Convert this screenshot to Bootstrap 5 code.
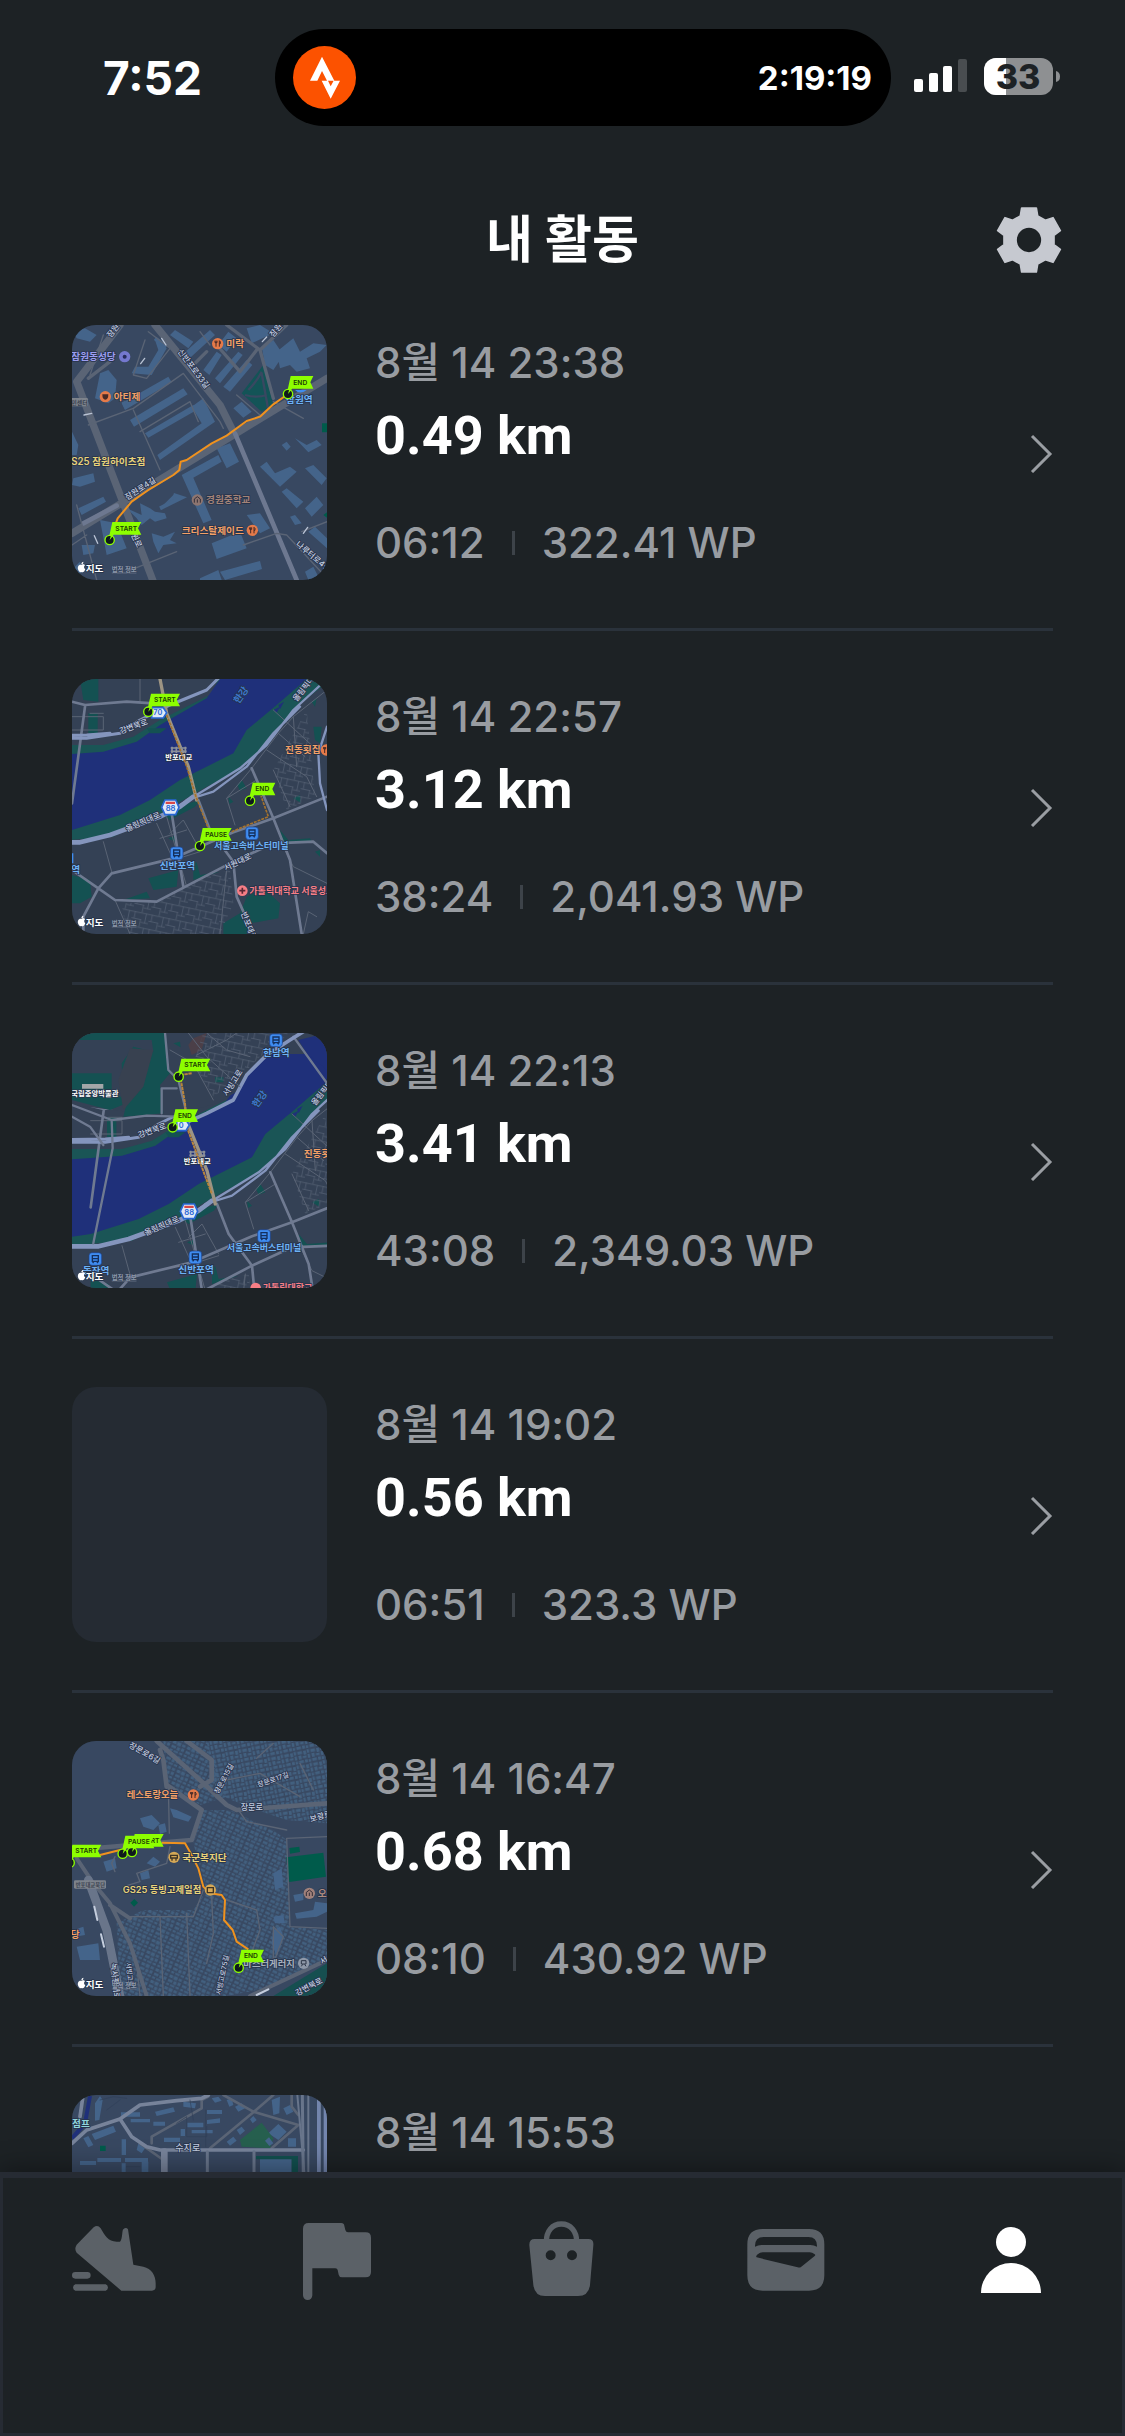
<!DOCTYPE html>
<html lang="ko">
<head>
    <meta charset="UTF-8">
    <meta name="viewport" content="width=device-width, initial-scale=1.0">
    <title>내 활동</title>
    <!-- Bootstrap CSS -->
    <link href="https://cdn.jsdelivr.net/npm/bootstrap@5.3.3/dist/css/bootstrap.min.css" rel="stylesheet">
    <!-- Custom CSS -->
    <style>
        body {
            background: #1d2225;
            color: #fff;
            font-family: Inter, "Noto Sans CJK KR", sans-serif;
        }

        /* Status bar */
        .status-bar {
            height: 155px;
            padding: 0 65px 0 103px;
        }

        .clock {
            width: 172px;
            font-size: 46px;
            line-height: 50px;
            font-weight: 700;
        }

        .island {
            height: 97px;
            margin-right: 23px;
            padding: 0 19px 0 18px;
            border-radius: 49px;
            background: #000;
            font-size: 33px;
            line-height: 40px;
            font-weight: 700;
        }

        .signal {
            margin-right: 17px;
        }

        /* Title bar */
        .title-bar {
            height: 170px;
            padding: 0 61px;
        }

        .title-bar h1 {
            font-size: 51px;
            line-height: 60px;
            font-weight: 700;
        }

        .side-slot {
            width: 70px;
            height: 70px;
        }

        /* Activity list */
        .activity-list {
            min-height: 0;
            padding: 0 72px;
        }

        .activity {
            padding-bottom: 48px;
            margin-bottom: 48px;
            border-bottom: 3px solid #2a323b;
            color: #989ca1;
            font-size: 42px;
            line-height: 50px;
            font-weight: 500;
        }

        .activity:hover {
            color: #989ca1;
        }

        .thumb {
            width: 255px;
            height: 255px;
            margin-right: 48px;
            border-radius: 24px;
            background: #252b33;
        }

        .activity-text {
            padding-top: 13px;
        }

        .distance {
            margin: 18px 0 52px;
            color: #fff;
            font-family: Roboto, sans-serif;
            font-size: 54px;
            line-height: 60px;
            font-weight: 700;
        }

        .stats {
            gap: 27px;
        }

        .stats i {
            width: 3px;
            height: 24px;
            background: #3d4349;
        }

        /* Tab bar */
        .tab-bar {
            height: 264px;
            padding: 39px 65px 0;
            border: 3px solid #262b33;
            border-top-width: 6px;
            background: #1d2225;
            box-shadow: 0 -4px 24px rgba(0, 0, 0, 0.35);
            color: #5b6167;
            z-index: 2;
        }

        .tab-bar a.active {
            color: #fff;
        }

        /* Map drawings, unscoped so that they also reach the shared symbols */
        text {
            font-weight: 600;
            paint-order: stroke;
            stroke: #27334a;
            stroke-width: 5px;
            stroke-linejoin: round;
            font-size: 29px;
        }

        .battery-text {
            font-size: 34px;
            font-weight: 800;
            fill: #1d2225;
            stroke: none;
        }

        .road-name {
            font-size: 24px;
            fill: #c3cde0;
            font-weight: 500;
        }

        .orange { fill: #f3a066; }
        .gold { fill: #e8d27a; }
        .blue { fill: #6cb1f5; }
        .red { fill: #f77e86; }
        .pale { fill: #fff; }

        .flag-text {
            font-size: 20px;
            fill: #1c3d05;
            stroke: none;
        }

        .roads {
            fill: none;
            stroke: #5a6475;
            stroke-linejoin: round;
            stroke-linecap: round;
        }

        .route {
            fill: none;
            stroke: #f0921e;
            stroke-width: 6;
            stroke-linejoin: round;
        }
    </style>
</head>
<body>
    <!-- Shared map symbols -->
    <svg width="0" height="0" class="position-absolute" aria-hidden="true">
        <defs>
            <g id="pin">
                <circle r="14" fill="#101a1c" stroke="#8dff00" stroke-width="4"/>
                <path d="M0 0L4-15L10-12Z" fill="#8dff00"/>
            </g>
            <path id="flagShort" d="M8-54H76L67-35L76-16H12L4-2L-3-4Z" fill="#8dff00"/>
            <path id="flagLong" d="M8-54H95L85-35L95-16H12L4-2L-3-4Z" fill="#8dff00"/>
            <g id="flagEnd">
                <use href="#flagShort"/><use href="#pin"/>
                <text class="flag-text" x="16" y="-28">END</text>
            </g>
            <g id="flagStart">
                <use href="#flagLong"/><use href="#pin"/>
                <text class="flag-text" x="17" y="-28">START</text>
            </g>
            <g id="flagPause">
                <use href="#flagLong"/><use href="#pin"/>
                <text class="flag-text" x="16" y="-28">PAUSE</text>
            </g>
            <g id="credit">
                <path d="M10-20C14-24 20-22 21-19C16-15 18-9 22-7C19 1 15 3 11 1C7 3 2 0 0-7C-2-15 3-23 10-20ZM10-22C10-27 13-29 16-30C17-26 14-22 10-22Z" fill="#fff"/>
                <text class="pale" x="23" y="0">지도</text>
                <text x="101" y="0" fill="#8e99ab" style="font-size:19px;stroke-width:1px" text-decoration="underline">법적 정보</text>
            </g>
            <g id="station">
                <rect x="-19" y="-19" width="38" height="38" rx="9" fill="#3f8cf0" stroke="#1d3f86" stroke-width="2"/>
                <path d="M-9-10H9V7H-9ZM-8 12L-4 7M8 12L4 7M-9-1H9" fill="none" stroke="#14305f" stroke-width="4"/>
            </g>
            <g id="food">
                <circle r="17" fill="#e57a49"/>
                <path d="M-5-9V9M-8-9V-3H-2V-9M5-9V9M5-9L8-6V0H5" fill="none" stroke="#472a26" stroke-width="3"/>
            </g>
            <pattern id="blocks" width="46" height="38" patternUnits="userSpaceOnUse" patternTransform="rotate(24)">
                <path d="M2 3H13V12H2ZM16 2H28V13H16ZM32 4H42V11H32ZM3 17H17V25H3ZM21 17H30V27H21ZM34 15H43V25H34ZM2 29H11V36H2ZM15 30H29V36H15ZM33 29H43V36H33Z" fill="#42607f"/>
            </pattern>
            <pattern id="blocksAlt" width="40" height="42" patternUnits="userSpaceOnUse" patternTransform="rotate(-12)">
                <path d="M2 2H16V11H2ZM20 3H28V15H20ZM31 1H38V11H31ZM3 15H12V26H3ZM16 18H27V25H16ZM31 15H38V27H31ZM2 30H16V38H2ZM20 29H28V39H20ZM31 31H38V39H31Z" fill="#42607f"/>
            </pattern>
            <pattern id="streets" width="52" height="44" patternUnits="userSpaceOnUse" patternTransform="rotate(12)">
                <path d="M0 2H52M0 22H30M30 30H52M8 0V22M28 22V44M42 2V30" fill="none" stroke="#566275" stroke-width="2"/>
            </pattern>
            <g id="hex88">
                <path d="M-26 0L-16-22H16L26 0L16 22H-16Z" fill="#dfe8f7" stroke="#2766d4" stroke-width="5"/>
                <path d="M-14-17H14V-10H-14Z" fill="#d84848"/>
                <text x="-14" y="12" fill="#2766d4" style="font-size:23px;stroke:none">88</text>
            </g>
            <g id="bridge">
                <path d="M-24-6H24M-24 4H24M-20-10V10M-7-10V10M7-10V10M20-10V10" fill="none" stroke="#8c919a" stroke-width="5"/>
                <text class="pale" text-anchor="middle" y="31" style="font-size:22px">반포대교</text>
            </g>
        </defs>
    </svg>

    <div class="vh-100 d-flex flex-column overflow-hidden">
        <!-- Status bar -->
        <div class="status-bar d-flex align-items-center flex-shrink-0">
            <div class="clock">7:52</div>
            <div class="island d-flex align-items-center justify-content-between flex-grow-1">
                <svg width="63" height="63" viewBox="99 78 189 189" aria-hidden="true">
                    <circle cx="193.500" cy="172.500" r="94.500" fill="#fc5200"/>
                    <path fill="#fff" d="M186 110L223 182H201L186 153L172 182H150ZM185 182H204L212 199L221 182H240L212 236Z"/>
                </svg>
                <span>2:19:19</span>
            </div>
            <svg class="signal" width="53" height="38" viewBox="0 0 53 38" aria-hidden="true">
                <rect x="0" y="20" width="9" height="13" rx="2" fill="#fff"/>
                <rect x="15" y="14" width="9" height="19" rx="2" fill="#fff"/>
                <rect x="29" y="7" width="9" height="26" rx="2" fill="#fff"/>
                <rect x="44" y="0" width="9" height="33" rx="2" fill="#494d50"/>
            </svg>
            <svg width="76" height="53" viewBox="0 -7 76 53" role="img" aria-label="33">
                <rect width="69" height="37" rx="12" fill="#8e9092"/>
                <path d="M12 0H22V37H12A12 12 0 0 1 0 25V12A12 12 0 0 1 12 0Z" fill="#fff"/>
                <path d="M72 13Q76 14 76 18.500T72 24Z" fill="#8e9092"/>
                <text class="battery-text" x="34" y="31" text-anchor="middle">33</text>
            </svg>
        </div>

        <!-- Title bar -->
        <header class="title-bar d-flex align-items-center flex-shrink-0">
            <div class="side-slot"></div>
            <h1 class="flex-grow-1 text-center mb-0">내 활동</h1>
            <button type="button" class="side-slot btn border-0 p-0 d-flex align-items-center justify-content-center" aria-label="설정">
                <svg width="68" height="68" viewBox="-102 -102 204 204">
                    <path fill="#c6c9d0" stroke="#c6c9d0" stroke-width="5" stroke-linejoin="round" fill-rule="evenodd" d="M-26-72L-22-96H22L26-72L49-59L72-67L94-28L75-14V14L94 28L72 67L49 59L26 72L22 96H-22L-26 72L-49 59L-72 67L-94 28L-75 14V-14L-94-28L-72-67L-49-59ZM39 0A39 39 0 1 0-39 0A39 39 0 1 0 39 0Z"/>
                </svg>
            </button>
        </header>

        <!-- Activity list -->
        <main class="activity-list flex-grow-1 overflow-hidden">
            <a href="#" class="activity d-flex text-decoration-none">
                <svg class="thumb flex-shrink-0" viewBox="36 30 765 765" aria-hidden="true">
                    <path fill="#384861" d="M36 30H801V795H36Z"/>
                    <g fill="#44648a">
                        <path d="M120 175L145 165L170 195L165 250L145 265L105 250ZM40 50L75 40L110 60L90 80L50 70ZM285 75L320 100L275 180L215 175L225 155L265 155L295 105ZM185 265L325 185L335 202L195 285ZM330 60L345 45L400 80L385 100ZM365 120L450 45L465 60L380 138ZM210 315L370 220L383 238L222 335ZM255 355L400 270L410 285L265 368ZM395 275L430 250L465 320L300 435L292 420L425 325ZM430 165L470 110L485 120L448 180ZM465 190L535 110L548 120L480 205ZM490 215L560 135L577 150L510 230ZM475 90L505 50L530 70L500 110ZM520 280L545 260L575 290L550 308ZM470 400L510 385L537 440L500 460ZM365 480L475 420L485 440L400 488L455 615L430 625ZM200 580L245 600L240 565L270 580L285 590L315 595L320 610L285 620L270 610L245 630L230 610ZM455 685L540 650L560 700L470 732ZM275 655L310 665L345 650L330 675L350 685L310 690L295 715L280 680ZM600 455L620 440L645 475L690 455L710 470L660 515ZM665 390L680 380L692 395L680 407ZM705 370L740 390L770 375L785 390L745 412ZM735 460L760 450L800 490L785 510ZM665 530L680 520L730 560L710 580ZM735 580L770 545L790 570L755 605ZM690 605L705 600L725 625L705 630ZM605 95L640 75L670 120L640 165L615 150ZM650 110L700 70L720 110L760 85L800 90L780 110L740 130L750 160L710 170L690 150L660 160ZM480 770L600 738L606 762L495 795ZM420 790L475 765L485 795H420ZM120 615L170 625L200 700L140 720ZM65 690L105 690L100 715L70 720ZM36 350L55 390L50 420H36ZM55 580L130 545L138 560L65 600ZM40 490L100 475L105 500L60 515L36 510ZM745 650L765 635L801 670V700ZM735 770L760 755L780 795H745ZM560 600L600 595L630 640L600 655Z"/>
                        <path d="M285 70L320 95M190 260L200 280M340 540L365 548L300 580" stroke="#44648a" stroke-width="12"/>
                        <path d="M40 760L60 740L70 770L45 780ZM560 40L600 30L640 55L575 85Z"/>
                    </g>
                    <path fill="#135457" d="M545 235L610 150L640 270L605 290Z"/>
                    <path fill="none" stroke="#384861" stroke-width="7" d="M565 225Q590 200 605 170M555 240Q590 250 620 240M605 175L625 285"/>
                    <path fill="#005b4b" d="M786 325H801V352H786ZM790 600L801 592V608Z"/>
                    <g class="roads">
                        <path stroke-width="22" d="M180 30L50 200L280 800M285 30L480 270L520 350M36 655L520 360L801 190"/>
                        <path stroke-width="10" d="M500 30L600 105L640 250M600 105L680 30M590 105L540 170L470 90M85 190L150 140M440 110L400 150"/>
                        <path stroke="#6d7890" stroke-width="14" d="M525 355L710 795M70 625L170 572"/>
                        <path stroke-width="4" d="M265 50L330 100L260 190L220 180L255 75M85 330L220 280L370 175L480 320L490 340M220 285L300 465M240 350L390 260L415 320M90 180L130 60M550 690L650 655L680 660L801 790M50 570L110 795M36 690L80 660M200 770L350 710M725 650L801 620M640 260L730 310M530 240L600 300M420 50L450 90"/>
                        <path stroke="#b9c3d4" stroke-width="4" d="M305 70L318 90M242 146L254 130M607 80L620 66M72 300L95 295M103 662L113 685M730 655L743 637"/>
                    </g>
                    <path class="route" d="M149 675L173 610L215 560L265 525L340 480L358 465L362 440L380 435L455 385L500 362L560 318L600 305L640 268L684 237"/>
                    <text class="road-name" transform="translate(152 70) rotate(-52)">잠원</text>
                    <text class="road-name" transform="translate(352 110) rotate(53)">신반포로33길</text>
                    <text class="road-name" transform="translate(202 556) rotate(-33)">잠원로4길</text>
                    <text class="road-name" transform="translate(640 68) rotate(-50)">잠원</text>
                    <text class="road-name" transform="translate(203 640) rotate(64)">잠원로</text>
                    <text class="road-name" transform="translate(706 690) rotate(40)">나루터로4길</text>
                    <text x="34" y="135" fill="#9b9df0">잠원동성당</text>
                    <circle cx="194" cy="125" r="17" fill="#7478cf"/><circle cx="194" cy="125" r="6" fill="#272c5c"/>
                    <use href="#food" x="473" y="86"/><text class="orange" x="499" y="96">미락</text>
                    <circle cx="136" cy="245" r="17" fill="#e57a49"/><path d="M127 238H145Q145 254 136 254T127 238Z" fill="#472a26"/>
                    <text class="orange" x="161" y="256">아티제</text>
                    <rect x="30" y="249" width="54" height="25" rx="4" fill="#7d838c"/>
                    <text x="34" y="269" fill="#3a4250" style="font-size:18px;stroke:none">민센터</text>
                    <text class="gold" x="34" y="449">S25 잠원하이츠점</text>
                    <circle cx="412" cy="555" r="17" fill="#8d7570"/><path d="M403 563V552L412 545L421 552V563M412 553V563" fill="none" stroke="#332e38" stroke-width="3"/>
                    <text x="438" y="565" fill="#a38378">경원중학교</text>
                    <text class="orange" x="365" y="656">크리스탈제이드</text><use href="#food" x="577" y="646"/>
                    <path d="M705 225Q720 240 740 225Z" fill="#3f8cf0"/>
                    <text class="blue" x="678" y="264">잠원역</text>
                    <use href="#flagEnd" x="684" y="237"/>
                    <use href="#flagStart" x="149" y="675"/>
                    <use href="#credit" x="54" y="770"/>
                </svg>
                <div class="activity-text">
                    <div>8월 14 23:38</div>
                    <div class="distance">0.49 km</div>
                    <div class="stats d-flex align-items-center"><span>06:12</span><i></i><span>322.41 WP</span></div>
                </div>
                <svg class="ms-auto align-self-center" width="24" height="40" viewBox="0 0 24 40" aria-hidden="true">
                    <path d="M3 3L21 21L3 39" fill="none" stroke="#9a9ea3" stroke-width="3"/>
                </svg>
            </a>

            <a href="#" class="activity d-flex text-decoration-none">
                <svg class="thumb flex-shrink-0" viewBox="36 27 765 765" aria-hidden="true">
                    <g id="riverside">
                        <path fill="#344155" d="M-100-200H900V900H-100Z"/>
                        <path fill="#1a5556" d="M-100 225L130 225L220 200L300 150L460 70L500-60L860-60L801 40L720 100L620 220L540 300L440 350L300 430L160 500L-100 520Z"/>
                        <path fill="#1f307a" d="M-100 262L36 252L130 245L230 215L300 165L440 85L480 27L540-60L830-60L740 27L650 105L560 180L520 250L420 300L360 330L270 390L180 435L36 480L-100 500Z"/>
                        <path fill="#145152" d="M60 27H115V95L70 90ZM85 130H113V190H85ZM260 175L320 175L300 190H270ZM770 85L765 110L755 95ZM545 330L560 355L540 362L532 345ZM505 380L520 395L508 402ZM760 170H785L780 220L765 210ZM300 430L330 415L420 390L405 410L330 450ZM265 625L355 600L350 650L280 660ZM400 580L410 577L420 615L480 605L400 630ZM190 690L260 665L270 685ZM660 480L685 510L750 505L755 515L670 515ZM765 545L780 540V560ZM36 615L90 630L95 680L60 700H36ZM490 760L540 730L560 680L610 655L660 700L655 745L570 760L560 792H490ZM325 505L345 497V515ZM700 385L720 375L722 398Z"/>
                        <path fill="#1f307a" d="M640 120L660 110L650 128ZM655 105L672 95L660 118Z"/>
                        <path fill="url(#streets)" d="M185 700L300 695L430 620L510 600L520 700L480 792H200ZM640 300L740 120L765 380L680 420Z"/>
                        <g class="roads">
                            <path stroke-width="3" d="M575 295L655 190L700 140L801 60M575 295L500 385L525 465M620 240L740 320L770 380M655 190L735 260M640 120L760 230M700 140L710 290M640 300L690 410M500 385L590 330M240 27V95M130 515L155 605M290 460L340 570L420 545M330 490L370 450L420 540M300 505L380 480M165 690L210 792M36 140H130V180H36M90 130H130M660 510L700 590L801 640M500 600L480 792M730 792L745 725L770 740M320 440L380 650"/>
                            <path stroke="#6f7a91" stroke-width="8" d="M115 655L155 610L340 565L520 487L640 445L801 380M575 295L640 445L690 570L725 792M115 655L165 690L290 695L520 575L640 520L760 515L801 550M115 655L70 740V792M36 600L115 655M335 430L370 650M415 390L450 480L520 575L530 680L580 792M36 95L75 105L200 95L280 100M75 110L36 400"/>
                            <path stroke="#8495bd" stroke-width="9" d="M-60 205L80 205L180 190L240 150L330 105L440 60L490 10M-60 197L80 195L150 190"/>
                            <path stroke="#8495bd" stroke-width="14" d="M-60 517L60 517L150 495L300 440L360 410L400 380"/>
                            <path stroke="#8495bd" stroke-width="7" d="M360 405L450 350L540 295L620 225L700 120L801 27M380 390L460 365L560 290L640 190L720 110M801 170L775 250L780 340L801 420"/>
                            <path stroke="#9d9483" stroke-width="10" d="M300 27L320 130L385 290L410 390"/>
                        </g>
                        <text class="road-name" transform="translate(182 192) rotate(-20)">강변북로</text>
                        <text class="road-name" transform="translate(202 485) rotate(-24)">올림픽대로</text>
                        <text class="road-name" transform="translate(710 96) rotate(-52)">올림픽대로</text>
                        <text transform="translate(536 103) rotate(-55)" fill="#3b78d0">한강</text>
                        <use href="#bridge" x="356" y="240"/>
                        <use href="#hex88" x="331" y="412"/>
                        <text class="orange" x="675" y="250">진동횟집</text>
                        <use href="#food" x="799" y="240"/>
                        <use href="#station" x="350" y="550"/>
                        <text class="blue" x="299" y="597">신반포역</text>
                    </g>
                    <path fill="none" stroke="#a5722d" stroke-width="5" stroke-dasharray="9 3" d="M320 135L380 290L408 380L445 475M515 485L625 440L603 378"/>
                    <text class="road-name" transform="translate(497 603) rotate(-26)">서원대로</text>
                    <text class="road-name" transform="translate(542 730) rotate(68)">반포대로</text>
                    <use href="#station" x="576" y="490"/>
                    <text class="blue" x="462" y="536" style="font-size:27px">서울고속버스터미널</text>
                    <path d="M36 550V580" stroke="#3f8cf0" stroke-width="8"/>
                    <text class="blue" x="34" y="610">역</text>
                    <circle cx="547" cy="662" r="16" fill="#f77e86"/><path d="M547 653V671M538 662H556" stroke="#5c2735" stroke-width="5"/>
                    <text class="red" x="568" y="672" style="font-size:27px">가톨릭대학교 서울성모</text>
                    <path d="M275 113H310L320 128L310 144H275Z" fill="#dfe8f7" stroke="#2766d4" stroke-width="5"/>
                    <text x="280" y="136" fill="#2766d4" style="font-size:22px;stroke:none">70</text>
                    <use href="#flagStart" x="265" y="125"/>
                    <use href="#flagEnd" x="570" y="392"/>
                    <use href="#flagPause" x="420" y="528"/>
                    <use href="#credit" x="54" y="767"/>
                </svg>
                <div class="activity-text">
                    <div>8월 14 22:57</div>
                    <div class="distance">3.12 km</div>
                    <div class="stats d-flex align-items-center"><span>38:24</span><i></i><span>2,041.93 WP</span></div>
                </div>
                <svg class="ms-auto align-self-center" width="24" height="40" viewBox="0 0 24 40" aria-hidden="true">
                    <path d="M3 3L21 21L3 39" fill="none" stroke="#9a9ea3" stroke-width="3"/>
                </svg>
            </a>

            <a href="#" class="activity d-flex text-decoration-none">
                <svg class="thumb flex-shrink-0" viewBox="36 39 765 765" aria-hidden="true">
                    <!-- Same stretch of the river, a little further north-west -->
                    <use href="#riverside" x="56" y="162"/>
                    <path fill="#344155" d="M36 39H720L660 85L580 140L530 215L470 250L330 290L36 255Z"/>
                    <path fill="#145152" d="M36 39H315L330 160L300 195L310 280L190 290L200 250L150 270L36 240V160H155V215L190 235L185 130L220 80L280 95L275 60H36ZM465 172H490V187H465ZM340 70L360 65L362 82Z"/>
                    <path fill="#384150" d="M210 85L280 90L250 200L190 270L175 180Z"/>
                    <path fill="#4b3f48" d="M400 55L440 39L425 90L395 105L385 75Z"/>
                    <path fill="url(#streets)" d="M430 39H690L600 110L530 180L460 230L400 130Z"/>
                    <path fill="#1f307a" d="M715 60L801 39V150L740 100Z"/>
                    <g class="roads">
                        <path stroke="#6f7a91" stroke-width="7" d="M315 39L325 150L355 180L375 260L380 300M36 255L155 300L260 287L350 290M700 50L801 190M155 300L158 385L100 670M36 290L90 320L130 375M305 280V205H350"/>
                        <path stroke="#8495bd" stroke-width="11" d="M385 305L440 280L520 240L560 165L620 105L690 60L730 35"/>
                        <path stroke-width="3" d="M385 39L440 110L540 200M440 39L500 90L570 110M330 90L400 130L460 240M410 105L500 60L530 39"/>
                    </g>
                    <path class="route" style="stroke:#b8853d" stroke-dasharray="10 2" d="M395 160L360 165L375 250L380 320L410 400L455 520"/>
                    <text class="road-name" transform="translate(502 230) rotate(-58)">서빙고로</text>
                    <path d="M66 192H130V206H66Z" fill="#a3a6a8"/>
                    <text class="pale" x="34" y="227" style="font-size:22px">국립중앙박물관</text>
                    <use href="#station" x="648" y="61"/>
                    <text class="blue" x="609" y="107">한남역</text>
                    <use href="#station" x="612" y="648"/>
                    <text class="blue" x="500" y="693" style="font-size:27px">서울고속버스터미널</text>
                    <use href="#station" x="106" y="717"/>
                    <text class="blue" x="68" y="761">동작역</text>
                    <circle cx="587" cy="804" r="16" fill="#f77e86"/>
                    <text class="red" x="608" y="812" style="font-size:27px">가톨릭대학교</text>
                    <path d="M350 300H378L388 315L378 332H350Z" fill="#dfe8f7" stroke="#2766d4" stroke-width="5"/>
                    <text x="356" y="324" fill="#2766d4" style="font-size:22px;stroke:none">0</text>
                    <use href="#flagStart" x="356" y="170"/>
                    <use href="#flagEnd" x="338" y="322"/>
                    <use href="#credit" x="54" y="779"/>
                </svg>
                <div class="activity-text">
                    <div>8월 14 22:13</div>
                    <div class="distance">3.41 km</div>
                    <div class="stats d-flex align-items-center"><span>43:08</span><i></i><span>2,349.03 WP</span></div>
                </div>
                <svg class="ms-auto align-self-center" width="24" height="40" viewBox="0 0 24 40" aria-hidden="true">
                    <path d="M3 3L21 21L3 39" fill="none" stroke="#9a9ea3" stroke-width="3"/>
                </svg>
            </a>

            <a href="#" class="activity d-flex text-decoration-none">
                <div class="thumb flex-shrink-0"></div>
                <div class="activity-text">
                    <div>8월 14 19:02</div>
                    <div class="distance">0.56 km</div>
                    <div class="stats d-flex align-items-center"><span>06:51</span><i></i><span>323.3 WP</span></div>
                </div>
                <svg class="ms-auto align-self-center" width="24" height="40" viewBox="0 0 24 40" aria-hidden="true">
                    <path d="M3 3L21 21L3 39" fill="none" stroke="#9a9ea3" stroke-width="3"/>
                </svg>
            </a>

            <a href="#" class="activity d-flex text-decoration-none">
                <svg class="thumb flex-shrink-0" viewBox="36 33 765 765" aria-hidden="true">
                    <path fill="#384861" d="M36 33H801V798H36Z"/>
                    <path fill="url(#blocks)" d="M430 240L510 240L640 300L680 330L690 590L801 600V690L640 770L500 798H180L170 580L250 540L400 540L440 480L400 340ZM310 33H440L500 200L420 225L320 160Z"/>
                    <path fill="url(#blocksAlt)" d="M440 33H801V280L680 270L560 230L470 190Z"/>
                    <path fill="#44648a" d="M240 265L275 255L300 280L280 300L250 290ZM330 235L350 240L395 260L385 275L340 262ZM295 285L315 280L320 305L300 312ZM130 395L165 385L170 415L140 425ZM260 400L280 380L300 395L285 410ZM240 430L265 420L270 445L245 450ZM50 650L115 640L120 690L60 690ZM40 600L70 590L75 615L45 620ZM705 550L760 540L765 515L801 520V545L770 560L710 566ZM640 430L665 415L670 470L645 480ZM640 560L670 555L675 580H645ZM700 495L730 490V510L705 515ZM640 600L660 590L670 620L650 680L635 640Z"/>
                    <path fill="#005b4b" d="M678 382L790 368L798 440L688 456ZM688 354L718 350L720 366L690 371ZM211 518L223 507L234 518L222 530Z"/>
                    <path fill="#164f50" d="M640 798L801 700V798Z"/>
                    <g class="roads">
                        <path stroke-width="14" d="M290 33L420 150L500 225L530 240L801 220M320 170L310 90L300 60M320 165L425 240L395 330L36 360M380 33L455 90V150L420 170"/>
                        <path stroke-width="4" d="M325 170L328 310M680 325L801 320M680 325L690 590L801 595M535 240L560 275L680 300M720 100L760 180M590 85L640 40M500 150L600 130L720 200M165 380L155 400L165 425M230 430L320 400L330 350M230 430L240 455L190 470M455 500L460 610L440 700M500 510L590 540L600 600L570 680M430 480L400 560L200 560M640 590L670 620L640 700ZM190 600L230 700L240 798M300 560L310 798M380 550L390 798"/>
                        <path stroke-width="12" d="M50 385L100 460L150 520L210 640L260 798M150 525L210 565M570 798L801 690"/>
                        <path stroke="#69758a" stroke-width="26" d="M85 450L140 600L180 798"/>
                        <path stroke="#c4cddd" stroke-width="6" d="M103 530L112 570M123 613L132 650M590 795L625 778"/>
                    </g>
                    <path class="route" d="M120 375L180 360M305 338L375 340L395 375L415 415L430 470L450 490L485 495L495 510L492 570L518 600L530 635L565 658"/>
                    <text class="road-name" transform="translate(205 50) rotate(30)">장문로6길</text>
                    <text class="road-name" style="font-size:21px" transform="translate(475 193) rotate(-62)">장문로15길</text>
                    <text class="road-name" style="font-size:21px" transform="translate(595 172) rotate(-19)">장문로17길</text>
                    <text class="road-name" x="542" y="239">장문로</text>
                    <text class="road-name" transform="translate(752 276) rotate(-16)">보광로</text>
                    <text class="road-name" transform="translate(152 700) rotate(84)">녹사평대로</text>
                    <text class="road-name" style="font-size:20px" transform="translate(198 698) rotate(84)">서빙고로</text>
                    <text class="road-name" style="font-size:21px" transform="translate(482 796) rotate(-78)">서빙고로75길</text>
                    <text class="road-name" transform="translate(712 798) rotate(-28)">강변북로</text>
                    <text class="road-name" transform="translate(786 704) rotate(-30)">서</text>
                    <text class="orange" x="200" y="205" style="font-size:28px">레스토랑오늘</text><use href="#food" x="400" y="195"/>
                    <circle cx="342" cy="382" r="17" fill="#d5a856"/><path d="M332 376H352V384H332ZM336 384V392M348 384V392" fill="none" stroke="#3f3526" stroke-width="4"/>
                    <text class="gold" x="367" y="392">국군복지단</text>
                    <text class="gold" x="188" y="490" style="font-size:28px">GS25 동빙고제일점</text>
                    <circle cx="451" cy="480" r="17" fill="#d5a856"/><path d="M442 473H460V488H442Z" fill="none" stroke="#3f3526" stroke-width="4"/>
                    <circle cx="748" cy="490" r="17" fill="#a0807a"/><path d="M739 498V487L748 480L757 487V498M748 488V498" fill="none" stroke="#332e38" stroke-width="3"/>
                    <text x="773" y="500" fill="#b08c80">오</text>
                    <rect x="42" y="451" width="96" height="25" rx="4" fill="#7d838c"/>
                    <text x="47" y="470" fill="#3a4250" style="font-size:16px;stroke:none">반포대교북단</text>
                    <text class="orange" x="32" y="623">당</text>
                    <text x="550" y="710" fill="#a6afbd" style="font-size:28px">마스터게러지</text>
                    <circle cx="731" cy="700" r="17" fill="#8e98a8"/><path d="M724 692H738V702H724ZM724 709L728 703M738 709L734 703" fill="none" stroke="#2c3546" stroke-width="3"/>
                    <use href="#flagStart" x="29" y="398"/>
                    <use href="#flagStart" x="216" y="366"/>
                    <use href="#flagPause" x="188" y="371"/>
                    <use href="#flagEnd" x="536" y="713"/>
                    <use href="#credit" x="54" y="773"/>
                </svg>
                <div class="activity-text">
                    <div>8월 14 16:47</div>
                    <div class="distance">0.68 km</div>
                    <div class="stats d-flex align-items-center"><span>08:10</span><i></i><span>430.92 WP</span></div>
                </div>
                <svg class="ms-auto align-self-center" width="24" height="40" viewBox="0 0 24 40" aria-hidden="true">
                    <path d="M3 3L21 21L3 39" fill="none" stroke="#9a9ea3" stroke-width="3"/>
                </svg>
            </a>

            <a href="#" class="activity d-flex text-decoration-none">
                <svg class="thumb flex-shrink-0" viewBox="36 45 765 765" aria-hidden="true">
                    <path fill="#384861" d="M36 45H801V810H36Z"/>
                    <path fill="#44648a" d="M105 70L120 48L128 60L118 120L105 122ZM95 162L160 137L168 155L105 180ZM70 175L85 168L100 195L85 202ZM183 97H240V110H183ZM212 117H270V127H212ZM285 95L340 82L345 95L290 108ZM280 125H315V137H280ZM362 147H375V168H362ZM382 128H430V142H382ZM441 90H486V102H441ZM441 120L480 115V128L441 132ZM395 150H458V160H395ZM312 173H360V186H312ZM185 178H198V225H185ZM112 234H183V246H112ZM60 243H108V255H60ZM195 234H264V246H195ZM235 190L255 205L245 220L230 210ZM245 245H265V276H245ZM185 250H197V276H185ZM455 55L475 50L485 62L465 68ZM500 60L515 55L520 75L508 80ZM525 80L545 70L555 85L535 95ZM635 60L660 50L658 100L640 105ZM670 85L690 75L700 95L680 105ZM625 160L655 132L680 155L655 180ZM570 118L580 108L590 120L578 130ZM530 150L545 140L555 152L540 165ZM500 185L520 170L530 182L510 197ZM684 175H708V200H684ZM600 237H695V276H600ZM370 65L408 70L405 85L370 80Z"/>
                    <path fill="#265f4e" d="M545 200L540 180L605 128L640 175L630 205Z"/>
                    <path fill="#44648a" d="M615 182L627 172L640 190L628 198Z"/>
                    <path fill="#12504f" d="M588 228H714V276H695V238H588Z"/>
                    <path fill="#005b4b" d="M120 197H137V213H120Z"/>
                    <path fill="none" stroke="#1f307a" stroke-width="12" d="M90 48L75 130L36 175"/>
                    <g class="roads">
                        <path stroke-width="8" d="M490 45L580 95L715 135M640 45L580 97L450 205M715 135L635 205M695 45V80L715 105M275 190V170L425 85V60L445 50M240 190L310 240"/>
                        <path stroke="#77839a" stroke-width="11" d="M68 55L60 110M36 190L80 150L180 117L240 75L350 62L425 55L445 45M182 120L215 170L260 200L300 210H730"/>
                        <path stroke="#77839a" stroke-width="20" d="M313 215V300"/>
                        <path stroke="#68758b" stroke-width="9" d="M442 215V300M582 215V300M727 45L730 300"/>
                        <path stroke="#68758b" stroke-width="6" d="M712 45L735 300M745 45V300M780 45V300M796 75V300"/>
                        <path stroke="#7385ad" stroke-width="10" d="M776 45V300M796 80V300"/>
                        <path stroke-width="2" stroke="#314057" d="M120 60L160 50L200 55M140 90L180 60M350 130L380 110V170H440V140M437 90V200M390 60L400 120M200 260H240"/>
                    </g>
                    <text x="36" y="141" fill="#8fd4dc">점프</text>
                    <text class="road-name" x="346" y="214" style="font-size:27px">수지로</text>
                </svg>
                <div class="activity-text">
                    <div>8월 14 15:53</div>
                </div>
            </a>
        </main>

        <!-- Tab bar -->
        <nav class="tab-bar position-relative d-flex align-items-start justify-content-between flex-shrink-0" aria-label="메뉴">
            <a href="#" class="d-flex text-reset" aria-label="운동">
                <svg width="90" height="90" viewBox="24 51 270 270" fill="currentColor">
                    <path d="M101 82Q113 73 122 85C134 106 144 125 170 125H180C188 118 186 88 190 88Q198 80 204 88L220 194L250 200C275 206 287 226 287 250V262Q286 272 276 272H184L50 158Q42 147 50 134Z"/>
                    <path d="M46 216H82A10 10 0 0 1 82 236H46A10 10 0 0 1 46 216ZM46 253H137A10 10 0 0 1 137 272H46A10 10 0 0 1 46 253Z"/>
                </svg>
            </a>
            <a href="#" class="d-flex text-reset" aria-label="챌린지">
                <svg width="90" height="90" viewBox="699 51 270 270" fill="currentColor">
                    <path d="M746 69H844Q852 69 853 77L856 90Q858 97 864 97H917Q933 97 933 113V216Q933 232 917 232H846Q838 232 836 224L833 210Q832 205 826 205H757V286A14 14 0 0 1 729 286V86Q729 69 746 69Z"/>
                </svg>
            </a>
            <a href="#" class="d-flex text-reset" aria-label="상점">
                <svg width="90" height="90" viewBox="1374 51 270 270" fill="currentColor">
                    <path d="M1459 125C1459 94 1476 72 1504 72S1550 94 1550 125" fill="none" stroke="currentColor" stroke-width="16"/>
                    <path fill-rule="evenodd" d="M1424 117H1585Q1602 117 1600 136L1590 255Q1586 288 1554 288H1455Q1424 288 1420 255L1408 136Q1407 117 1424 117ZM1487 166A15 15 0 1 0 1457 166A15 15 0 1 0 1487 166ZM1551 166A15 15 0 1 0 1521 166A15 15 0 1 0 1551 166Z"/>
                </svg>
            </a>
            <a href="#" class="d-flex text-reset" aria-label="지갑">
                <svg width="90" height="90" viewBox="729 51 270 270" fill="currentColor">
                    <path fill-rule="evenodd" d="M791 87H930Q976 87 976 133V226Q976 272 930 272H791Q745 272 745 226V133Q745 87 791 87ZM768 140Q777 135 788 135H934Q945 135 954 140Q955 111 928 111H794Q767 111 768 140ZM773 172L896 202Q902 204 907 200L947 168Q951 165 946 162Q940 157 932 157H791Q783 157 776 163Q769 169 773 172Z"/>
                </svg>
            </a>
            <a href="#" class="active d-flex" aria-label="내 활동" aria-current="page">
                <svg width="90" height="90" viewBox="1404 51 270 270" fill="currentColor">
                    <circle cx="1536" cy="126" r="45"/>
                    <path d="M1446 279A90 90 0 0 1 1626 279Z"/>
                </svg>
            </a>
        </nav>
    </div>

    <!-- Bootstrap JS -->
    <script src="https://cdn.jsdelivr.net/npm/bootstrap@5.3.3/dist/js/bootstrap.bundle.min.js"></script>
</body>
</html>
